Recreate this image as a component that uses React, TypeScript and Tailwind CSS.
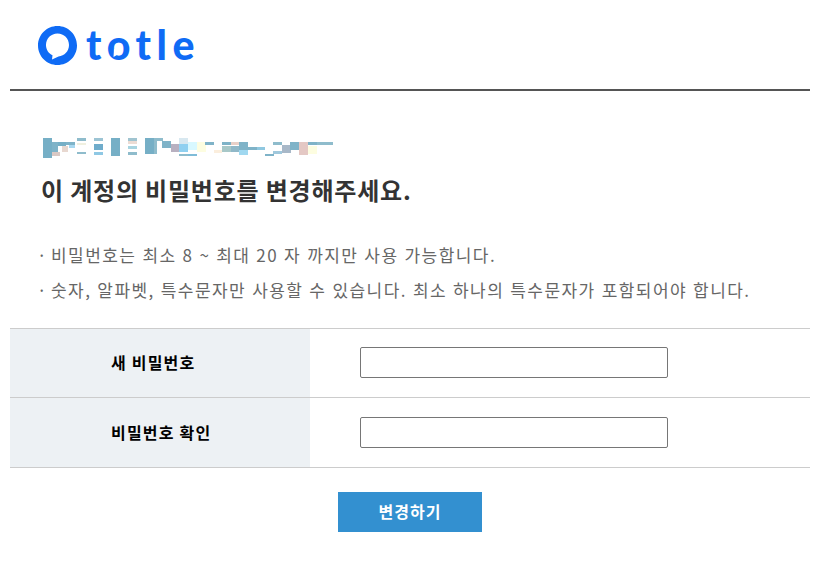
const mosaic = [
  [43, 138, 9, 20, '#76afc6'], [52, 142, 6, 10, '#7fb3c8'], [52, 152, 8, 4, '#d9c8c4'], [58, 142, 8, 4, '#76afc6'], [62, 146, 6, 6, '#e8d8d0'],
  [66, 142, 9, 3, '#7fb3c8'], [69, 145, 6, 3, '#a8d8f0'], [77, 138, 9, 3, '#8fbccc'], [77, 143, 9, 2, '#f0f0e0'], [77, 152, 9, 2, '#8fbccc'],
  [94, 138, 9, 3, '#9cc4d4'], [94, 144, 9, 6, '#6faccb'], [94, 152, 9, 3, '#8fc8e4'], [111, 138, 9, 18, '#76afc6'], [128, 138, 9, 3, '#a0c4d0'],
  [128, 141, 9, 3, '#ecdcd4'], [128, 146, 9, 3, '#a8d4e0'], [128, 152, 9, 3, '#8fbccc'], [145, 138, 9, 16, '#76afc6'], [154, 138, 9, 3, '#8fbccc'],
  [154, 141, 3, 13, '#8fbccc'], [162, 141, 9, 7, '#7fb3c8'], [171, 144, 8, 8, '#b8b0c0'], [179, 138, 9, 6, '#d8e8f0'], [179, 144, 9, 8, '#90d0f0'],
  [179, 154, 9, 2, '#8fbccc'], [188, 154, 9, 2, '#7fbcd8'], [188, 142, 9, 8, '#d8f8ff'], [197, 142, 9, 10, '#fdfde0'], [205, 142, 9, 3, '#7fb3c8'],
  [214, 150, 8, 3, '#fbeedd'], [222, 142, 9, 3, '#7fb3c8'], [222, 146, 9, 6, '#a8c8c8'], [231, 142, 9, 3, '#e8d0c8'], [231, 146, 8, 6, '#90b8c8'],
  [239, 142, 9, 8, '#7fb3c8'], [239, 150, 9, 5, '#a0d8f0'], [248, 147, 9, 3, '#7fb3c8'], [257, 147, 8, 3, '#90c8e0'], [273, 142, 9, 3, '#8fbccc'],
  [265, 154, 9, 2, '#7fb3c8'], [282, 145, 9, 8, '#a8b8c8'], [290, 142, 9, 8, '#7fb3c8'], [299, 142, 9, 13, '#e4c8c4'], [308, 146, 9, 8, '#fdfde0'],
  [308, 142, 9, 3, '#7fb3c8'], [317, 142, 16, 3, '#8fbccc'], [273, 151, 9, 3, '#a0c8dc'],
]

function Logo() {
  return (
    <div className="flex items-center gap-[9px]">
      <svg width="39" height="39" viewBox="0 0 39 39" fill="none">
        <path
          fillRule="evenodd"
          clipRule="evenodd"
          d="M19.5 0C30.3 0 39 8.7 39 19.5C39 30.3 30.3 39 19.5 39C8.7 39 0 30.3 0 19.5C0 8.7 8.7 0 19.5 0ZM19.5 7.5C13 7.5 8 12.6 8 19C8 23.6 10.6 27.5 14.5 29.3L14 33.5L20.5 30.5C26.5 30 31 25.1 31 19C31 12.6 26 7.5 19.5 7.5Z"
          fill="#0f6bf5"
        />
      </svg>
      <span className="relative -mt-[2px] font-['Lato',sans-serif] text-[41px] leading-[40px] font-black tracking-[5.5px] text-[#0f6bf5]">
        totle
        <svg width="9" height="9" viewBox="0 0 9 9" className="absolute top-[24px] left-[27px]">
          <path d="M1 0L0.5 8L9 3Z" fill="#ffffff" />
        </svg>
      </span>
    </div>
  )
}

function PasswordRow({ label, height, labelTop, inputTop }: { label: string; height: string; labelTop: string; inputTop: string }) {
  return (
    <div className={`flex ${height} border-b border-[#cccccc]`}>
      <div className={`w-[300px] bg-[#edf1f4] pl-[101px] text-[16px] font-bold tracking-[1.2px] text-black ${labelTop}`}>
        {label}
      </div>
      <div className={`flex-1 pl-[50px] ${inputTop}`}>
        <input type="password" className="block h-[31px] w-[308px] rounded-[2px] border border-[#767676] bg-white" />
      </div>
    </div>
  )
}

export default function App() {
  return (
    <div className="mx-[10px] w-[800px] bg-white font-['Noto_Sans_CJK_KR','Noto_Sans',sans-serif]">
      <header className="flex h-[91px] items-start border-b-2 border-[#555555] pt-[26px] pl-[28px]">
        <Logo />
      </header>

      <section className="px-[31px]">
        <svg width="300" height="24" viewBox="43 136 300 24" className="mt-[45px] ml-[2px] block">
          {mosaic.map(([x, y, w, h, fill], i) => (
            <rect key={i} x={x as number} y={y as number} width={w as number} height={h as number} fill={fill as string} />
          ))}
        </svg>
        <h1 className="mt-[13px] text-[24px] leading-[34px] font-bold tracking-[0.8px] text-[#333333]">
          이 계정의 비밀번호를 변경해주세요.
        </h1>
        <ul className="mt-[30px] -ml-[4px] text-[17px] leading-[35px] tracking-[1.45px] [word-spacing:0.7px] text-[#666666]">
          <li className="flex gap-[3px]"><span>·</span><span>비밀번호는 최소 8 ~ 최대 20 자 까지만 사용 가능합니다.</span></li>
          <li className="flex gap-[3px]"><span>·</span><span>숫자, 알파벳, 특수문자만 사용할 수 있습니다. 최소 하나의 특수문자가 포함되어야 합니다.</span></li>
        </ul>
      </section>

      <div className="mt-[21px] border-t border-[#cccccc]">
        <PasswordRow label="새 비밀번호" height="h-[69px]" labelTop="pt-[21px]" inputTop="pt-[18px]" />
        <PasswordRow label="비밀번호 확인" height="h-[70px]" labelTop="pt-[22px]" inputTop="pt-[19px]" />
      </div>

      <div className="mt-[24px] flex justify-center">
        <button className="h-[40px] w-[144px] bg-[#3390d0] pb-[3px] text-[16px] font-bold tracking-[1px] text-white">변경하기</button>
      </div>
    </div>
  )
}
